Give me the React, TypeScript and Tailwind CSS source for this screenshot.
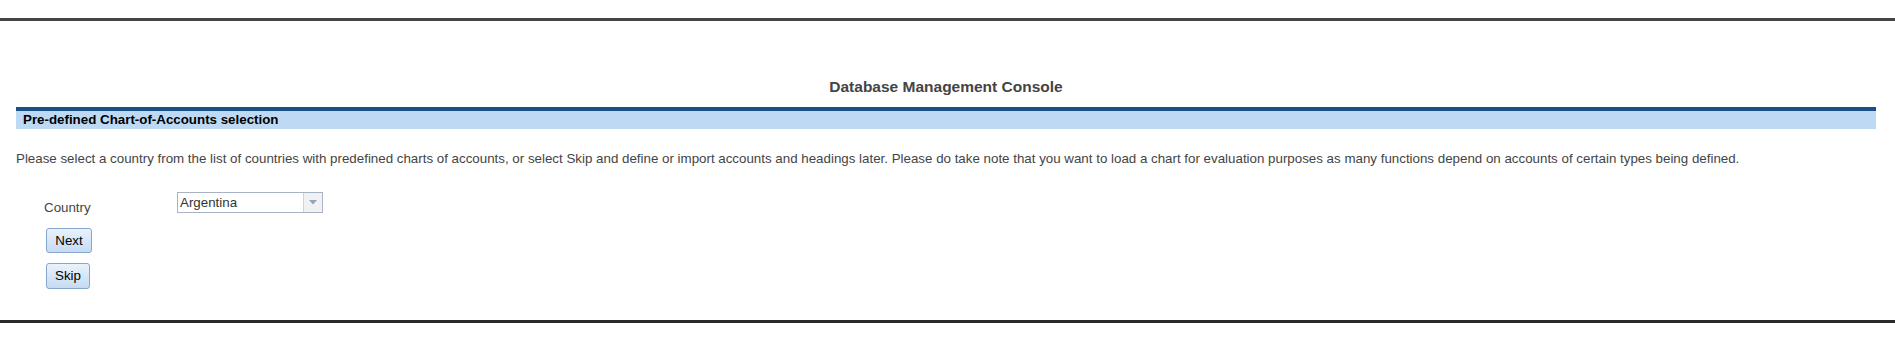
export default function App() {
  return (
    <div className="min-h-[362px] w-full bg-white font-['Liberation_Sans',Arial,sans-serif]">
      <div className="h-[18px]" />
      <div className="h-[3px] w-full bg-[#444]" />

      <div className="ml-[16px] mr-[19px]">
        <h1 className="mt-[57px] mb-[11px] text-center text-[15.5px] font-bold leading-[18px] text-[#444]">
          Database Management Console
        </h1>

        <div className="border-t-4 border-[#1b4f86] bg-[#bdd9f4] pl-[7px] text-[13.33px] font-bold leading-[18px] text-black">
          Pre-defined Chart-of-Accounts selection
        </div>

        <p className="mt-[22px] text-[13.33px] leading-[16px] text-[#444]">
          Please select a country from the list of countries with predefined charts of accounts, or select Skip and define or import accounts and headings later. Please do take note that you want to load a chart for evaluation purposes as many functions depend on accounts of certain types being defined.
        </p>

        <div className="mt-[25px] flex items-start">
          <label className="ml-[28px] w-[133px] pt-[8px] text-[13.33px] leading-[16px] text-[#444]">Country</label>
          <div className="flex h-[21px] w-[146px] border border-[#aab3c3] bg-white">
            <span className="flex-1 pl-[2px] text-[13.33px] leading-[19px] text-[#333]">Argentina</span>
            <span className="flex w-[19px] items-center justify-center border-l border-[#d0d4da] bg-[#f1f1f1]">
              <svg width="8" height="5" viewBox="0 0 8 5">
                <path d="M0 0h8L4 4.5z" fill="#90a3c2" />
              </svg>
            </span>
          </div>
        </div>

        <div className="mt-[12px] ml-[30px] flex flex-col items-start gap-[10px]">
          <button className="h-[25px] w-[46px] rounded-[3px] border border-[#86a6cb] bg-gradient-to-b from-[#eaf2fc] to-[#c5dbf3] text-[13.33px] leading-[23px] text-black">
            Next
          </button>
          <button className="h-[26px] w-[44px] rounded-[3px] border border-[#86a6cb] bg-gradient-to-b from-[#eaf2fc] to-[#c5dbf3] text-[13.33px] leading-[24px] text-black">
            Skip
          </button>
        </div>
      </div>

      <div className="mt-[31px] h-[3px] w-full bg-[#2a2a2a]" />
    </div>
  );
}
